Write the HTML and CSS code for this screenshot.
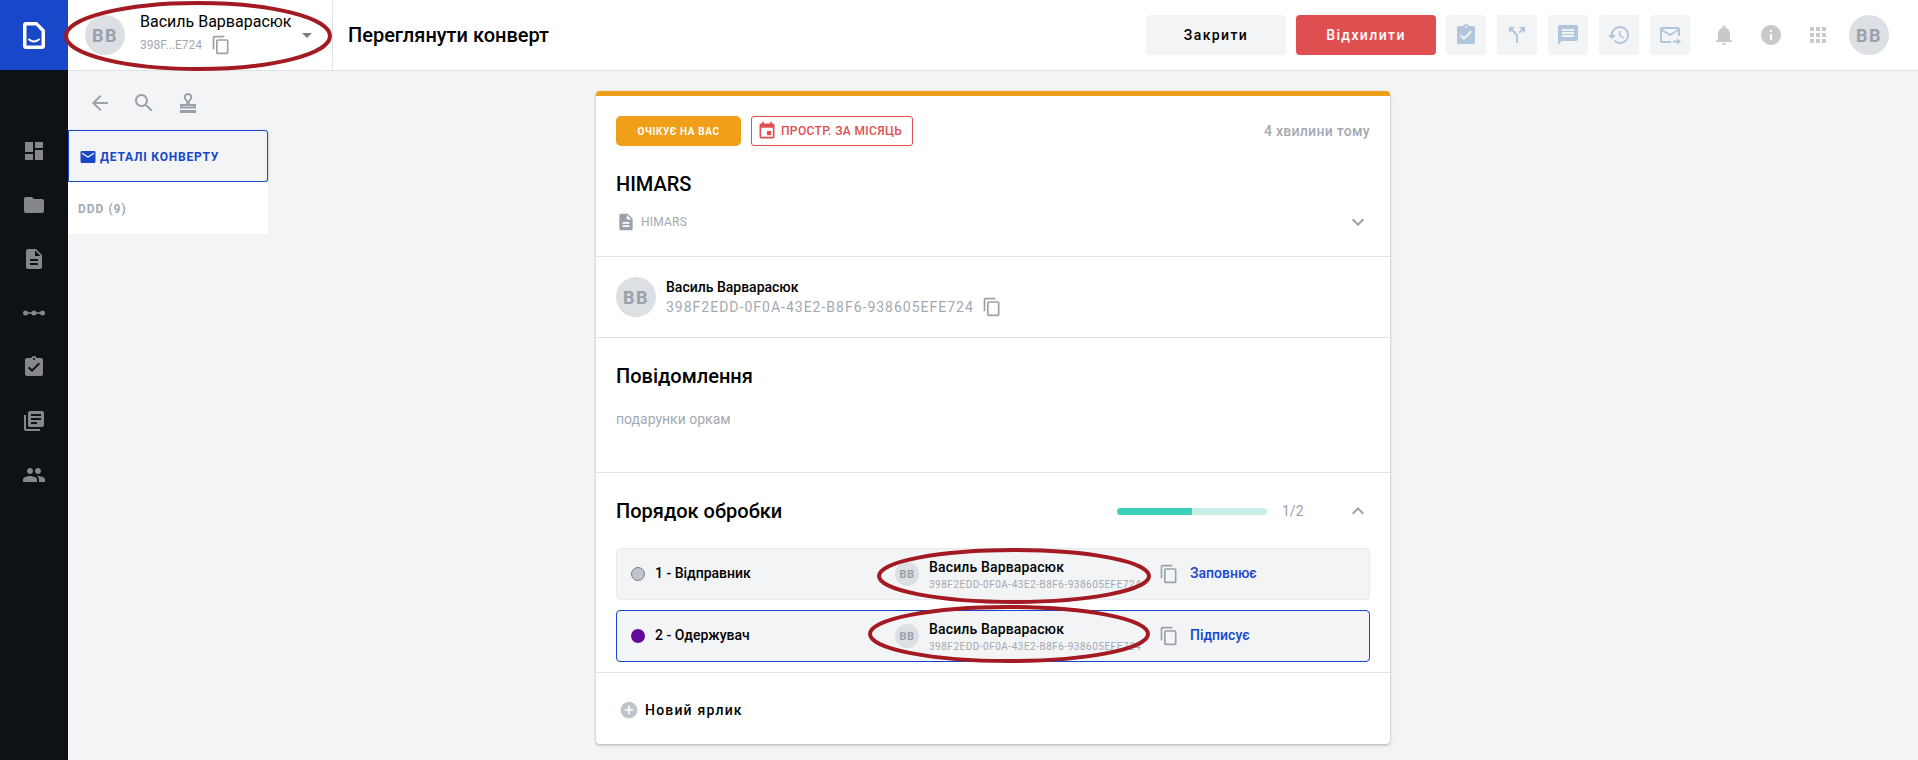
FILE: index.html
```html
<!DOCTYPE html>
<html lang="uk">
<head>
<meta charset="utf-8">
<title>Переглянути конверт</title>
<link rel="stylesheet" href="styles.css">
</head>
<body>
<svg class="defs" width="0" height="0" aria-hidden="true">
  <symbol id="i-dashboard" viewBox="0 0 24 24"><path d="M3 13h8V3H3v10zm0 8h8v-6H3v6zm10 0h8V11h-8v10zm0-18v6h8V3h-8z"/></symbol>
  <symbol id="i-folder" viewBox="0 0 24 24"><path d="M10 4H4c-1.1 0-1.99.9-1.99 2L2 18c0 1.1.9 2 2 2h16c1.1 0 2-.9 2-2V8c0-1.1-.9-2-2-2h-8l-2-2z"/></symbol>
  <symbol id="i-doc" viewBox="0 0 24 24"><path d="M14 2H6c-1.1 0-1.99.9-1.99 2L4 20c0 1.1.89 2 1.99 2H18c1.1 0 2-.9 2-2V8l-6-6zm2 16H8v-2h8v2zm0-4H8v-2h8v2zm-3-5V3.5L18.5 9H13z"/></symbol>
  <symbol id="i-flow" viewBox="0 0 24 24"><circle cx="3.5" cy="12" r="2.5"/><circle cx="12" cy="12" r="2.5"/><circle cx="20.5" cy="12" r="2.5"/><path d="M3 11.2h18v1.6H3z"/></symbol>
  <symbol id="i-task" viewBox="0 0 24 24"><path d="M19 3h-4.18C14.4 1.84 13.3 1 12 1c-1.3 0-2.4.84-2.82 2H5c-1.1 0-2 .9-2 2v14c0 1.1.9 2 2 2h14c1.1 0 2-.9 2-2V5c0-1.1-.9-2-2-2zm-7 0c.55 0 1 .45 1 1s-.45 1-1 1-1-.45-1-1 .45-1 1-1zm-2 14l-4-4 1.41-1.41L10 14.17l6.59-6.59L18 9l-8 8z"/></symbol>
  <symbol id="i-library" viewBox="0 0 24 24"><path d="M4 6H2v14c0 1.1.9 2 2 2h14v-2H4V6zm16-4H8c-1.1 0-2 .9-2 2v12c0 1.1.9 2 2 2h12c1.1 0 2-.9 2-2V4c0-1.1-.9-2-2-2zm-1 9H9V9h10v2zm-4 4H9v-2h6v2zm4-8H9V5h10v2z"/></symbol>
  <symbol id="i-people" viewBox="0 0 24 24"><path d="M16 11c1.66 0 2.99-1.34 2.99-3S17.66 5 16 5c-1.66 0-3 1.34-3 3s1.34 3 3 3zm-8 0c1.66 0 2.99-1.34 2.99-3S9.66 5 8 5C6.34 5 5 6.34 5 8s1.34 3 3 3zm0 2c-2.33 0-7 1.17-7 3.5V19h14v-2.5c0-2.33-4.67-3.5-7-3.5zm8 0c-.29 0-.62.02-.97.05 1.16.84 1.97 1.97 1.97 3.45V19h6v-2.5c0-2.33-4.67-3.5-7-3.5z"/></symbol>
  <symbol id="i-back" viewBox="0 0 24 24"><path d="M20 11H7.83l5.59-5.59L12 4l-8 8 8 8 1.41-1.41L7.83 13H20v-2z"/></symbol>
  <symbol id="i-search" viewBox="0 0 24 24"><path d="M15.5 14h-.79l-.28-.27C15.41 12.59 16 11.11 16 9.5 16 5.91 13.09 3 9.5 3S3 5.91 3 9.5 5.91 16 9.5 16c1.61 0 3.09-.59 4.23-1.57l.27.28v.79l5 4.99L20.49 19l-4.99-5zm-6 0C7.01 14 5 11.99 5 9.5S7.01 5 9.5 5 14 7.01 14 9.5 11.99 14 9.5 14z"/></symbol>
  <symbol id="i-stamp" viewBox="0 0 24 24"><path d="M12 2a4.2 4.2 0 0 0-4.2 4.2c0 1.6.9 2.7 1.7 3.6.5.6.8 1 .8 1.6V13H4v4.5h16V13h-6.3v-1.6c0-.6.3-1 .8-1.6.8-.9 1.7-2 1.7-3.6A4.2 4.2 0 0 0 12 2zm0 2a2.2 2.2 0 0 1 2.2 2.2c0 .9-.5 1.5-1.2 2.3-.5.6-1 1.2-1 2 0-.8-.5-1.4-1-2-.7-.8-1.2-1.4-1.2-2.3A2.2 2.2 0 0 1 12 4zM6 15h12v.5H6V15zM4 19h16v3H4z" fill-rule="evenodd"/></symbol>
  <symbol id="i-copy" viewBox="0 0 24 24"><path d="M16 1H4c-1.1 0-2 .9-2 2v14h2V3h12V1zm3 4H8c-1.1 0-2 .9-2 2v14c0 1.1.9 2 2 2h11c1.1 0 2-.9 2-2V7c0-1.1-.9-2-2-2zm0 16H8V7h11v14z"/></symbol>
  <symbol id="i-mail" viewBox="0 0 24 24"><path d="M20 4H4c-1.1 0-1.99.9-1.99 2L2 18c0 1.1.9 2 2 2h16c1.1 0 2-.9 2-2V6c0-1.1-.9-2-2-2zm0 4l-8 5-8-5V6l8 5 8-5v2z"/></symbol>
  <symbol id="i-event" viewBox="0 0 24 24"><path d="M17 12h-5v5h5v-5zM16 1v2H8V1H6v2H5c-1.11 0-1.99.9-1.99 2L3 19c0 1.1.89 2 2 2h14c1.1 0 2-.9 2-2V5c0-1.1-.9-2-2-2h-1V1h-2zm3 18H5V8h14v11z"/></symbol>
  <symbol id="i-chat" viewBox="0 0 24 24"><path d="M20 2H4c-1.1 0-1.99.9-1.99 2L2 22l4-4h14c1.1 0 2-.9 2-2V4c0-1.1-.9-2-2-2zm-2 12H6v-2h12v2zm0-3H6V9h12v2zm0-3H6V6h12v2z"/></symbol>
  <symbol id="i-history" viewBox="0 0 24 24"><path d="M13 3c-4.97 0-9 4.03-9 9H1l3.89 3.89.07.14L9 12H6c0-3.87 3.13-7 7-7s7 3.13 7 7-3.13 7-7 7c-1.93 0-3.68-.79-4.94-2.06l-1.42 1.42C8.27 19.99 10.51 21 13 21c4.97 0 9-4.03 9-9s-4.03-9-9-9zm-1 5v5l4.28 2.54.72-1.21-3.5-2.08V8H12z"/></symbol>
  <symbol id="i-split" viewBox="0 0 24 24"><path d="M14 4l2.29 2.29-2.88 2.88 1.42 1.42 2.88-2.88L20 10V4zm-4 0H4v6l2.29-2.29 4.71 4.7V20h2v-8.41l-5.29-5.3z"/></symbol>
  <symbol id="i-forward" viewBox="0 0 24 24"><path d="M20 4H4c-1.1 0-2 .9-2 2v12c0 1.1.9 2 2 2h9v-2H4V8l8 5 8-5v5h2V6c0-1.1-.9-2-2-2zm-8 7L4 6h16l-8 5zm7 4l4 3.5-4 3.5v-2.5h-4v-2h4V15z"/></symbol>
  <symbol id="i-bell" viewBox="0 0 24 24"><path d="M12 22c1.1 0 2-.9 2-2h-4c0 1.1.89 2 2 2zm6-6v-5c0-3.07-1.64-5.64-4.5-6.32V4c0-.83-.67-1.5-1.5-1.5s-1.5.67-1.5 1.5v.68C7.63 5.36 6 7.92 6 11v5l-2 2v1h16v-1l-2-2z"/></symbol>
  <symbol id="i-info" viewBox="0 0 24 24"><path d="M12 2C6.48 2 2 6.48 2 12s4.48 10 10 10 10-4.48 10-10S17.52 2 12 2zm1 15h-2v-6h2v6zm0-8h-2V7h2v2z"/></symbol>
  <symbol id="i-apps" viewBox="0 0 24 24"><path d="M4 8h4V4H4v4zm6 12h4v-4h-4v4zm-6 0h4v-4H4v4zm0-6h4v-4H4v4zm6 0h4v-4h-4v4zm6-10v4h4V4h-4zm-6 4h4V4h-4v4zm6 6h4v-4h-4v4zm0 6h4v-4h-4v4z"/></symbol>
  <symbol id="i-more" viewBox="0 0 24 24"><path d="M16.59 8.59L12 13.17 7.41 8.59 6 10l6 6 6-6z"/></symbol>
  <symbol id="i-less" viewBox="0 0 24 24"><path d="M12 8l-6 6 1.41 1.41L12 10.83l4.59 4.58L18 14z"/></symbol>
  <symbol id="i-drop" viewBox="0 0 24 24"><path d="M7 10l5 5 5-5z"/></symbol>
  <symbol id="i-add" viewBox="0 0 24 24"><path d="M12 2C6.48 2 2 6.48 2 12s4.48 10 10 10 10-4.48 10-10S17.52 2 12 2zm5 11h-4v4h-2v-4H7v-2h4V7h2v4h4v2z"/></symbol>
</svg>

<div class="app">
  <nav class="rail">
    <div class="logo">
      <svg class="logo-mark" viewBox="0 0 22 27"><path d="M3 0h11l8 8v16a3 3 0 0 1-3 3H3a3 3 0 0 1-3-3V3a3 3 0 0 1 3-3z" fill="#fff"/><path d="M3.5 3.5h9.5l5.5 6v14h-15z" fill="#1847c9"/><path d="M6 17.5c3 2.5 7 2.5 10 0" fill="none" stroke="#fff" stroke-width="2" stroke-linecap="round"/></svg>
    </div>
    <ul class="rail-list">
      <li><svg class="ico-24"><use href="#i-dashboard"/></svg></li>
      <li><svg class="ico-24"><use href="#i-folder"/></svg></li>
      <li><svg class="ico-24"><use href="#i-doc"/></svg></li>
      <li><svg class="ico-24"><use href="#i-flow"/></svg></li>
      <li><svg class="ico-24"><use href="#i-task"/></svg></li>
      <li><svg class="ico-24"><use href="#i-library"/></svg></li>
      <li><svg class="ico-24"><use href="#i-people"/></svg></li>
    </ul>
  </nav>

  <div class="main">
    <header class="topbar">
      <div class="account">
        <div class="avatar avatar-40">BB</div>
        <div class="account-text">
          <div class="account-name">Василь Варварасюк</div>
          <div class="account-id"><span>398F...E724</span><svg class="ico-20 grey"><use href="#i-copy"/></svg></div>
        </div>
        <svg class="ico-24 drop"><use href="#i-drop"/></svg>
      </div>
      <h1 class="page-title">Переглянути конверт</h1>
      <div class="actions">
        <button class="btn btn-light">Закрити</button>
        <button class="btn btn-red">Відхилити</button>
        <button class="tool"><svg class="ico-24"><use href="#i-task"/></svg></button>
        <button class="tool"><svg class="ico-24"><use href="#i-split"/></svg></button>
        <button class="tool"><svg class="ico-24"><use href="#i-chat"/></svg></button>
        <button class="tool"><svg class="ico-24"><use href="#i-history"/></svg></button>
        <button class="tool"><svg class="ico-24"><use href="#i-forward"/></svg></button>
        <div class="utils">
          <svg class="ico-24"><use href="#i-bell"/></svg>
          <svg class="ico-24"><use href="#i-info"/></svg>
          <svg class="ico-24"><use href="#i-apps"/></svg>
        </div>
        <div class="avatar avatar-40">BB</div>
      </div>
    </header>

    <div class="content">
      <aside class="panel">
        <div class="panel-tools">
          <svg class="ico-24 grey"><use href="#i-back"/></svg>
          <svg class="ico-24 grey"><use href="#i-search"/></svg>
          <svg class="ico-24 grey"><use href="#i-stamp"/></svg>
        </div>
        <div class="tab-active"><svg class="ico-18"><use href="#i-mail"/></svg><span>ДЕТАЛІ КОНВЕРТУ</span></div>
        <div class="tab-item">DDD (9)</div>
      </aside>

      <main class="card">
        <section class="sec sec-head">
          <div class="head-top">
            <span class="badge-amber">ОЧІКУЄ НА ВАС</span>
            <span class="badge-red"><svg class="ico-20"><use href="#i-event"/></svg>ПРОСТР. ЗА МІСЯЦЬ</span>
            <span class="time">4 хвилини тому</span>
          </div>
          <h2 class="doc-title">HIMARS</h2>
          <div class="doc-row">
            <svg class="ico-20 grey"><use href="#i-doc"/></svg>
            <span>HIMARS</span>
            <svg class="ico-24 grey push"><use href="#i-more"/></svg>
          </div>
        </section>

        <section class="sec sec-sender">
          <div class="avatar avatar-40">BB</div>
          <div>
            <div class="sender-name">Василь Варварасюк</div>
            <div class="sender-id"><span>398F2EDD-0F0A-43E2-B8F6-938605EFE724</span><svg class="ico-20 grey"><use href="#i-copy"/></svg></div>
          </div>
        </section>

        <section class="sec sec-msg">
          <h3 class="sec-title">Повідомлення</h3>
          <p class="msg">подарунки оркам</p>
        </section>

        <section class="sec sec-order">
          <div class="order-head">
            <h3 class="sec-title">Порядок обробки</h3>
            <div class="progress"><div class="progress-fill"></div></div>
            <span class="count">1/2</span>
            <svg class="ico-24 grey"><use href="#i-less"/></svg>
          </div>
          <div class="row">
            <span class="dot dot-grey"></span>
            <span class="role">1 - Відправник</span>
            <div class="avatar avatar-24">BB</div>
            <div class="person"><div class="person-name">Василь Варварасюк</div><div class="person-id">398F2EDD-0F0A-43E2-B8F6-938605EFE724</div></div>
            <svg class="ico-20 grey copy"><use href="#i-copy"/></svg>
            <span class="state">Заповнює</span>
          </div>
          <div class="row row-active">
            <span class="dot dot-purple"></span>
            <span class="role">2 - Одержувач</span>
            <div class="avatar avatar-24">BB</div>
            <div class="person"><div class="person-name">Василь Варварасюк</div><div class="person-id">398F2EDD-0F0A-43E2-B8F6-938605EFE724</div></div>
            <svg class="ico-20 grey copy"><use href="#i-copy"/></svg>
            <span class="state">Підписує</span>
          </div>
        </section>

        <section class="sec-add">
          <svg class="ico-20 add"><use href="#i-add"/></svg>
          <span>Новий ярлик</span>
        </section>
      </main>
    </div>
  </div>
</div>

<svg class="marks" viewBox="0 0 1918 760" aria-hidden="true">
  <ellipse cx="198" cy="36" rx="132" ry="33"/>
  <ellipse cx="1014" cy="576" rx="135" ry="26"/>
  <ellipse cx="1009" cy="634" rx="139" ry="27"/>
</svg>
</body>
</html>
```
FILE: styles.css
```css
* { box-sizing: border-box; }
html, body { margin: 0; height: 100%; }
body {
  position: relative;
  font-family: Roboto, "Liberation Sans", sans-serif;
  color: #000;
  background: #f3f4f6;
  overflow: hidden;
}
h1, h2, h3, p, ul { margin: 0; padding: 0; }
ul { list-style: none; }
button { font-family: inherit; border: 0; padding: 0; }
svg { fill: currentColor; flex: none; display: block; }
.defs { position: absolute; }

.ico-24 { width: 24px; height: 24px; }
.ico-20 { width: 20px; height: 20px; }
.ico-18 { width: 18px; height: 18px; }
.grey { color: #9aa1ab; }

.app { display: flex; height: 760px; }

.rail { width: 68px; flex: none; background: #0e1116; color: #85878c; }
.logo { height: 70px; background: #1847c9; display: flex; align-items: center; justify-content: center; }
.logo-mark { width: 22px; height: 27px; }
.rail-list { display: flex; flex-direction: column; gap: 30px; padding-top: 69px; align-items: center; }

.main { flex: 1; min-width: 0; display: flex; flex-direction: column; }

.topbar {
  height: 71px;
  flex: none;
  background: #fff;
  border-bottom: 1px solid #dfe2e6;
  display: flex;
  align-items: stretch;
}
.account {
  width: 265px;
  flex: none;
  border-right: 1px solid #dfe2e6;
  display: flex;
  align-items: center;
  padding-left: 17px;
}
.account-text { margin-left: 15px; flex: 1; min-width: 0; }
.account-name { font-size: 16px; line-height: 20px; margin-top: -3px; }
.account-id { display: flex; align-items: center; gap: 9px; font-size: 12px; color: #a4a9b1; height: 20px; margin-top: 3px; }
.drop { color: #7c8088; margin-right: 13px; margin-left: -4px; }

.avatar {
  border-radius: 50%;
  background: #dcdfe3;
  color: #9aa1ab;
  font-weight: 700;
  display: flex;
  align-items: center;
  justify-content: center;
  flex: none;
  letter-spacing: 1.5px;
}
.avatar-40 { width: 40px; height: 40px; font-size: 18px; }
.avatar-24 { width: 24px; height: 24px; font-size: 11px; letter-spacing: .5px; }

.page-title { font-size: 20px; font-weight: 500; line-height: 70px; margin-left: 15px; }

.actions { margin-left: auto; display: flex; align-items: center; padding-right: 29px; gap: 11px; }
.btn { width: 140px; height: 40px; border-radius: 4px; font-size: 14px; font-weight: 500; letter-spacing: 1.4px; }
.btn-light { background: #f3f4f6; color: #000; margin-right: -1px; }
.btn-red { background: #e04f4f; color: #fff; margin-right: -1px; }
.tool { width: 40px; height: 40px; border-radius: 4px; background: #f3f4f6; color: #b1c5dc; display: flex; align-items: center; justify-content: center; }
.utils { display: flex; align-items: center; gap: 23px; color: #c8c9cb; margin-left: 11px; margin-right: 8px; }

.content { flex: 1; display: flex; align-items: flex-start; min-height: 0; }

.panel { width: 200px; flex: none; }
.panel-tools { height: 59px; display: flex; align-items: center; gap: 20px; padding-left: 20px; padding-top: 4px; }
.tab-active {
  height: 52px;
  background: #f3f4f6;
  border: 1px solid #1847c9;
  border-radius: 0 3px 3px 0;
  box-shadow: 0 1px 3px rgba(0,0,0,.25);
  display: flex;
  align-items: center;
  gap: 3px;
  padding: 1px 0 0 10px;
  color: #1847c9;
  font-size: 12px;
  font-weight: 700;
  letter-spacing: .8px;
}
.tab-item {
  height: 52px;
  background: #fff;
  display: flex;
  align-items: center;
  padding: 2px 0 0 10px;
  font-size: 12px;
  font-weight: 700;
  letter-spacing: 1px;
  color: #a4a9b1;
}

.card {
  width: 794px;
  margin: 20px 0 0 328px;
  background: #fff;
  border-top: 5px solid #f09f19;
  border-radius: 4px;
  box-shadow: 0 1px 3px rgba(0,0,0,.3);
}
.sec { padding: 0 20px; border-bottom: 1px solid #dfe2e6; }

.sec-head { padding-top: 20px; padding-bottom: 24px; }
.head-top { display: flex; align-items: center; }
.badge-amber {
  width: 125px; height: 30px; border-radius: 5px; padding-top: 1px;
  background: #f09f19; color: #fff;
  display: flex; align-items: center; justify-content: center;
  font-size: 10px; font-weight: 700; letter-spacing: .6px;
}
.badge-red {
  height: 30px; width: 162px; margin-left: 10px; border-radius: 3px;
  border: 1px solid #e04f4f; color: #e04f4f;
  display: flex; align-items: center; gap: 4px; padding-left: 5px;
  font-size: 12px; font-weight: 500; letter-spacing: .35px;
}
.time { margin-left: auto; font-size: 14px; font-weight: 500; color: #a4a9b1; letter-spacing: .3px; }
.doc-title { font-size: 20px; font-weight: 500; line-height: 24px; margin-top: 26px; }
.doc-row { display: flex; align-items: center; height: 20px; margin-top: 16px; font-size: 12px; color: #a4a9b1; gap: 5px; letter-spacing: .2px; }
.doc-row .push { margin-left: auto; }

.sec-sender { display: flex; align-items: center; gap: 10px; padding-top: 20px; padding-bottom: 20px; }
.sender-name { font-size: 14px; font-weight: 500; line-height: 18px; }
.sender-id { display: flex; align-items: center; gap: 8px; font-size: 14px; letter-spacing: 1px; color: #a4a9b1; line-height: 20px; margin-top: 1px; }

.sec-title { font-size: 20px; font-weight: 500; line-height: 24px; }
.sec-msg { padding-top: 26px; height: 135px; }
.msg { font-size: 14px; line-height: 20px; color: #a4a9b1; margin-top: 21px; }

.sec-order { padding-top: 26px; padding-bottom: 10px; }
.order-head { display: flex; align-items: center; height: 24px; margin-bottom: 25px; }
.progress { width: 150px; height: 7px; border-radius: 4px; background: #c7eee7; overflow: hidden; margin-left: auto; }
.progress-fill { width: 50%; height: 100%; background: #3bd1b9; }
.count { font-size: 14px; color: #9aa1ab; margin-left: 15px; width: 64px; }

.row {
  height: 52px;
  background: #f3f4f6;
  border: 1px solid #e7e9ec;
  border-radius: 4px;
  display: flex;
  align-items: center;
  padding-left: 14px;
}
.row + .row { margin-top: 10px; }
.row-active { border-color: #1847c9; }
.dot { width: 14px; height: 14px; border-radius: 50%; flex: none; }
.dot-grey { background: #bfc4cc; border: 1px solid #7c8088; }
.dot-purple { background: #63099b; }
.role { font-size: 14px; font-weight: 500; margin: 0 0 2px 10px; width: 240px; }
.person { margin-left: 10px; width: 220px; flex: none; padding-top: 2px; }
.person-name { font-size: 14px; font-weight: 500; line-height: 18px; letter-spacing: .15px; }
.person-id { font-size: 10px; letter-spacing: .5px; color: #a4a9b1; line-height: 14px; margin-top: 2px; white-space: nowrap; }
.copy { margin-left: 10px; }
.state { color: #1847c9; font-size: 14px; font-weight: 500; margin: 0 0 2px 11px; }

.sec-add { height: 71px; display: flex; align-items: center; gap: 6px; padding: 3px 0 0 23px; font-size: 14px; font-weight: 500; letter-spacing: 1.2px; }
.add { color: #bfc4cc; }

.marks { position: absolute; inset: 0; width: 1918px; height: 760px; pointer-events: none; fill: none; }
.marks ellipse { stroke: #a31a22; stroke-width: 4; }
```
